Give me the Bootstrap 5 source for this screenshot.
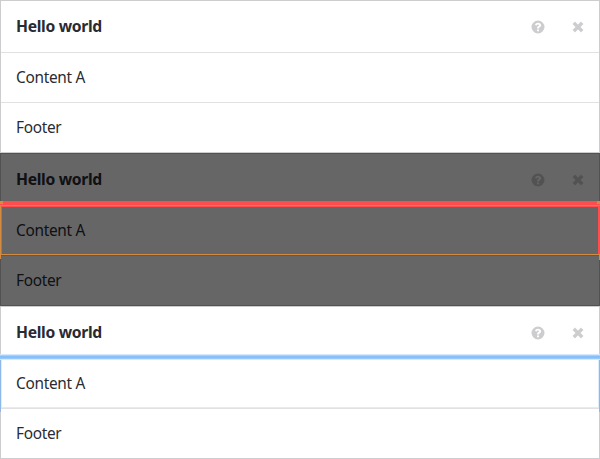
<!DOCTYPE html>
<html lang="en">
<head>
<meta charset="utf-8">
<meta name="viewport" content="width=device-width, initial-scale=1">
<title>Hello world</title>
<link href="https://cdn.jsdelivr.net/npm/bootstrap@5.3.0/dist/css/bootstrap.min.css" rel="stylesheet">
<style>
body{font-family:"Noto Sans",sans-serif;font-size:15.4px;line-height:20px;letter-spacing:-.3px;color:#292b33;background:#fff;overflow:hidden}
.panel{height:153px;border:1px solid #cdcdd0;padding-left:15px}
.panel-head,.panel-content{border-bottom:1px solid #e1e1e4;margin-left:-15px;padding-left:15px}
.panel-head{height:52px}
.panel-content{height:50px}
.panel-foot{height:49px}
.panel-head span{font-size:15.7px;letter-spacing:-.32px;margin-top:-1px}
.tools{color:#cdcdd0;gap:27px;padding-right:15px}
.tools svg{display:block;fill:currentColor}
.shade{inset:-1px;background:rgba(0,0,0,.6)}
.diff-band{left:-1px;right:-1px;top:47px;height:6px;background:linear-gradient(#ff4d4d 0 4px,#ef7d3e 4px 5px,#ff4d4d 5px)}
.diff-box{left:-1px;right:-1px;top:53px;height:48px;border:solid #ff4d4d;border-width:0 2px}
.diff-box::before{content:"";position:absolute;left:-2px;top:-2px;width:1px;height:54px;background:#d28b40}
.diff-base{left:-1px;right:-1px;top:100px;height:1px;background:#d28b40}
.diff-tail{right:-1px;top:101px;width:1px;height:5px;background:#d28b40}
.diff-corner{top:47px;width:3px;height:3px;background:#d98a40}
.corner-start{left:-1px}
.corner-end{right:-1px}
.focus-band{left:-1px;right:-1px;top:47px;height:6px;background:linear-gradient(#d7eafd 0 1px,#a5d0fd 1px 2px,#85bffc 2px 4px,#98c9fc 4px 5px,#d7eafd 5px)}
.focus-box{left:-1px;right:-1px;top:53px;height:52px;border:solid #8db8e8;border-width:0 1px}
.focus-box::before{content:"";position:absolute;left:0;right:0;top:0;height:48px;border:1px solid #dfedfb;border-top:0}
</style>
</head>
<body>
<svg class="d-none">
<symbol id="help" viewBox="0 0 14 14"><path fill-rule="evenodd" d="M7 .5a6.5 6.5 0 1 0 0 13 6.5 6.5 0 0 0 0-13ZM6 9.4h2v1.900H6ZM3.900 4.800C4.600 3.400 5.600 2.700 7.100 2.700c1.700 0 3 1.050 3 2.500 0 1.200-.7 1.750-1.300 2.150-.6.350-.8.600-.8 1.250H6c0-1.500.450-2 1.300-2.500.5-.3.700-.5.700-.9 0-.4-.4-.7-1-.7-.6 0-.9.3-1.500 1.150Z"/></symbol>
<symbol id="close" viewBox="0 0 12 12"><path d="M3 .9 6 3.900 9 .9 11.100 3 8.100 6l3 3L9 11.100l-3-3-3 3L.9 9l3-3-3-3Z" stroke="currentColor" stroke-width=".7" stroke-linejoin="round"/></symbol>
</svg>
<section class="panel position-relative">
<div class="panel-head d-flex align-items-center justify-content-between"><span class="fw-bold">Hello world</span><div class="tools d-flex align-items-center"><svg width="14" height="14"><use href="#help"/></svg><svg width="12" height="12"><use href="#close"/></svg></div></div>
<div class="panel-content d-flex align-items-center"><span>Content A</span></div>
<div class="panel-foot d-flex align-items-center"><span>Footer</span></div>
</section>
<section class="panel position-relative">
<div class="panel-head d-flex align-items-center justify-content-between"><span class="fw-bold">Hello world</span><div class="tools d-flex align-items-center"><svg width="14" height="14"><use href="#help"/></svg><svg width="12" height="12"><use href="#close"/></svg></div></div>
<div class="panel-content d-flex align-items-center"><span>Content A</span></div>
<div class="panel-foot d-flex align-items-center"><span>Footer</span></div>
<div class="shade position-absolute"></div>
<div class="diff-band position-absolute"></div>
<div class="diff-box position-absolute"></div>
<div class="diff-base position-absolute"></div>
<div class="diff-tail position-absolute"></div>
<div class="diff-corner corner-start position-absolute"></div>
<div class="diff-corner corner-end position-absolute"></div>
</section>
<section class="panel position-relative">
<div class="panel-head d-flex align-items-center justify-content-between"><span class="fw-bold">Hello world</span><div class="tools d-flex align-items-center"><svg width="14" height="14"><use href="#help"/></svg><svg width="12" height="12"><use href="#close"/></svg></div></div>
<div class="panel-content d-flex align-items-center"><span>Content A</span></div>
<div class="panel-foot d-flex align-items-center"><span>Footer</span></div>
<div class="focus-band position-absolute"></div>
<div class="focus-box position-absolute"></div>
</section>
<script src="https://cdn.jsdelivr.net/npm/bootstrap@5.3.0/dist/js/bootstrap.bundle.min.js"></script>
</body>
</html>
